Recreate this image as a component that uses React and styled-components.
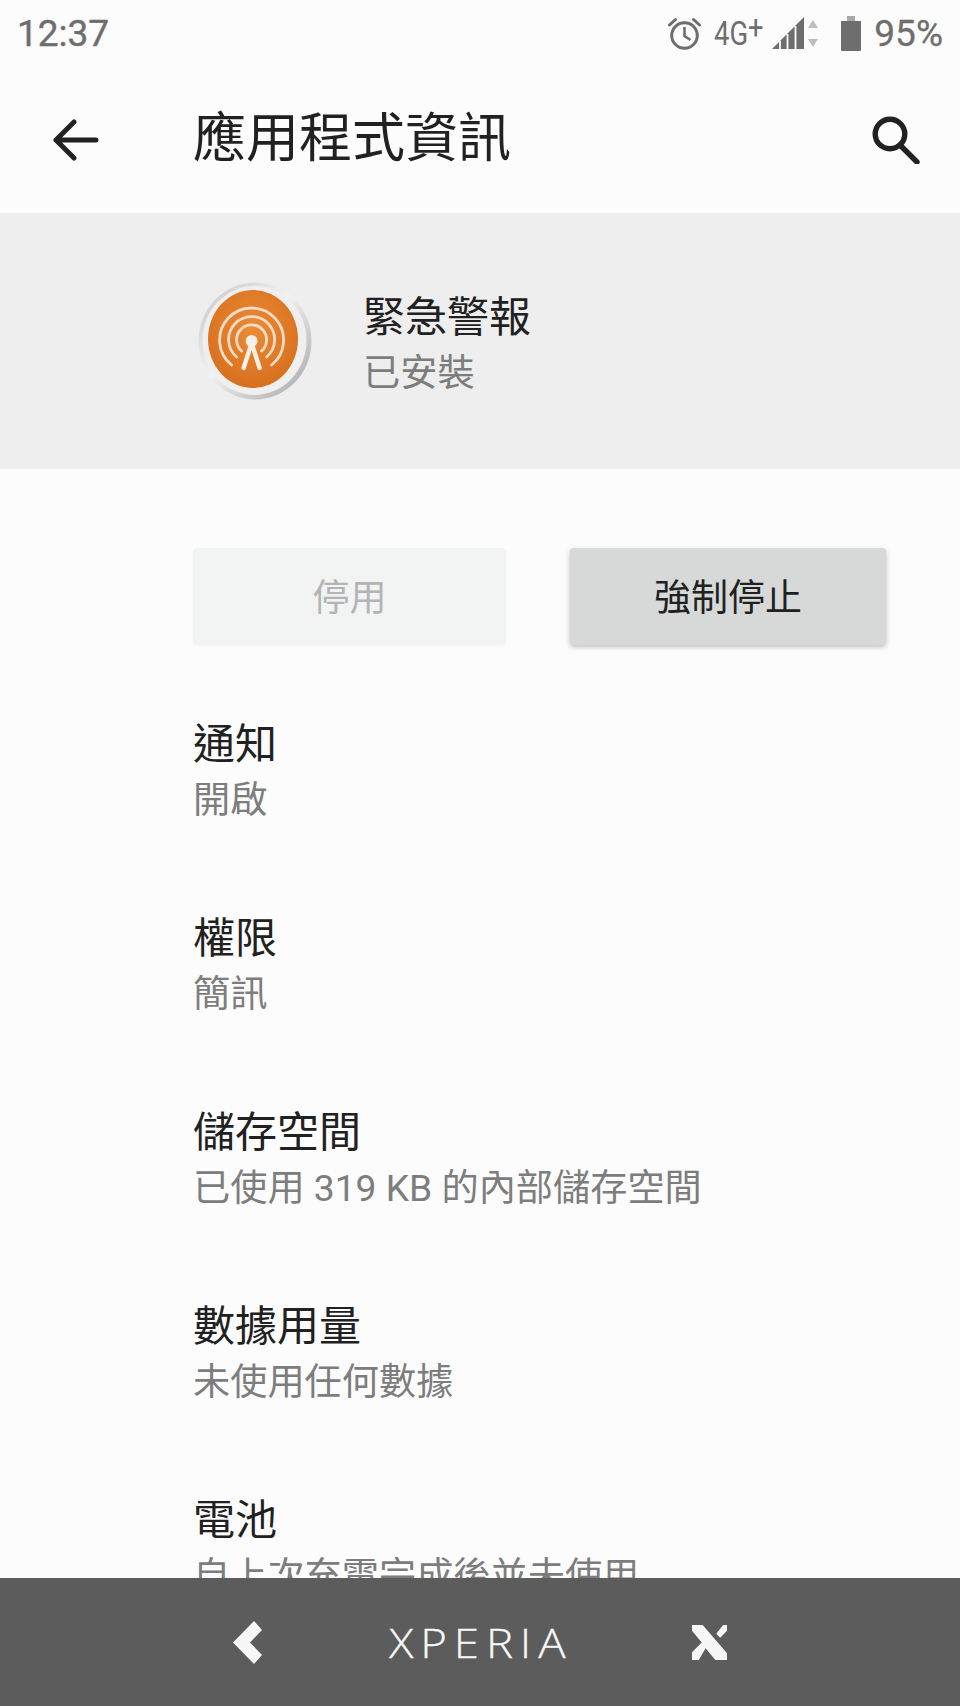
import React from "react";
import styled, { createGlobalStyle } from "styled-components";

const GlobalStyle = createGlobalStyle`
  html, body {
    margin: 0;
    padding: 0;
    background: #fcfcfc;
  }
`;

const Page = styled.div`
  width: 960px;
  height: 1706px;
  display: flex;
  flex-direction: column;
  overflow: hidden;
  background: #fcfcfc;
  font-family: Roboto, "Noto Sans CJK TC", sans-serif;
`;

const StatusBar = styled.div`
  height: 66px;
  flex: none;
  display: flex;
  align-items: center;
  justify-content: space-between;
  padding: 0 17px;
  color: #6e6e6e;
`;

const Clock = styled.span`
  font-size: 37px;
  font-weight: 400;
  -webkit-text-stroke: 0.4px #6e6e6e;
`;

const StatusIcons = styled.div`
  display: flex;
  align-items: center;
`;

const IconSlot = styled.div`
  display: flex;
  margin-right: ${(p) => p.$gap}px;
`;

const Network = styled.span`
  width: 50px;
  margin: 0 8px 0 13px;
  font-size: 33px;
  white-space: nowrap;
  transform: scaleX(0.83);
  transform-origin: left center;
`;

const NetworkPlus = styled.span`
  position: relative;
  top: -6px;
`;

const Percent = styled.span`
  font-size: 37px;
  font-weight: 400;
  -webkit-text-stroke: 0.3px #6e6e6e;
`;

const Toolbar = styled.div`
  height: 147px;
  flex: none;
  display: flex;
  align-items: center;
  padding: 0 40px 0 53px;
  color: #212121;
`;

const Title = styled.h1`
  margin: 0 0 0 94px;
  flex: 1;
  font-size: 53px;
  font-weight: 400;
  line-height: 1;
`;

const AppHeader = styled.div`
  height: 256px;
  flex: none;
  background: #eeeeee;
  display: flex;
  align-items: center;
  padding-left: 197px;
`;

const AppText = styled.div`
  margin-left: 50px;
  margin-top: 8px;
  display: flex;
  flex-direction: column;
`;

const ItemTitle = styled.div`
  font-size: 42px;
  line-height: 56px;
  color: #212121;
`;

const ItemSub = styled.div`
  font-size: 37.2px;
  line-height: 54px;
  color: #7d7d7d;
  white-space: nowrap;
`;

const Content = styled.div`
  flex: 1;
  min-height: 0;
  overflow: hidden;
  padding: 79px 74px 0 193px;
`;

const ButtonRow = styled.div`
  display: flex;
  justify-content: space-between;
  margin-bottom: 72px;
`;

const ActionButton = styled.button`
  width: ${(p) => (p.disabled ? 313 : 316)}px;
  height: 97px;
  border: 0;
  border-radius: 4px;
  padding: 0 0 4px;
  font-family: inherit;
  font-size: 37px;
  background: ${(p) => (p.disabled ? "#f2f3f3" : "#d7d8d8")};
  color: ${(p) => (p.disabled ? "#b4b4b4" : "#212121")};
  box-shadow: ${(p) =>
    p.disabled ? "0 1px 2px rgba(0,0,0,0.03)" : "0 2px 5px rgba(0,0,0,0.25)"};
`;

const Item = styled.div`
  height: 194px;
`;

const BottomBar = styled.div`
  height: 128px;
  flex: none;
  background: #5c5c5c;
  display: flex;
  align-items: center;
  justify-content: center;
  color: #f7f7f7;
`;

const Brand = styled.span`
  width: 181px;
  margin: 0 122px 0 126px;
  font-family: "Open Sans", sans-serif;
  font-size: 40px;
  font-weight: 300;
  letter-spacing: 6px;
  white-space: nowrap;
  transform: scaleX(1.14);
  transform-origin: left center;
  -webkit-text-stroke: 0.3px #f7f7f7;
`;

const AlarmIcon = () => (
  <svg width="33" height="33" viewBox="0 0 33 33" fill="none" stroke="#6e6e6e" strokeWidth="3">
    <circle cx="16.5" cy="18.5" r="12.8" />
    <path d="M16.5 10v9l6 4" strokeWidth="2.6" />
    <path d="M1.5 8l6-5.5M31.5 8l-6-5.5" strokeLinecap="round" />
  </svg>
);

const SignalIcon = () => (
  <svg width="46" height="32" viewBox="0 0 46 32">
    <path d="M0 32L32 0v32z" fill="#6e6e6e" />
    <path d="M8 32v-8M15.5 32v-15M23.5 32v-23" stroke="#fcfcfc" strokeWidth="1.8" />
    <path d="M41 3l5 8h-10zM41 30l5-8h-10z" fill="#bdbdbd" />
  </svg>
);

const BatteryIcon = () => (
  <svg width="20" height="35" viewBox="0 0 20 35">
    <path d="M6 0h8v5H6z" fill="#a8a8a8" />
    <path d="M0 5h20v29a1 1 0 0 1-1 1H1a1 1 0 0 1-1-1z" fill="#6e6e6e" />
  </svg>
);

const BackIcon = () => (
  <svg width="46" height="42" viewBox="0 0 46 42" fill="none" stroke="#212121" strokeWidth="5" strokeLinecap="round">
    <path d="M3 21h40M21 3L3 21l18 18" strokeLinejoin="round" />
  </svg>
);

const SearchIcon = () => (
  <svg width="48" height="48" viewBox="0 0 48 48" fill="none" stroke="#212121" strokeWidth="5.4">
    <circle cx="18" cy="18" r="14.8" />
    <path d="M28 29l17 17" strokeLinecap="round" />
  </svg>
);

const AppIcon = () => (
  <svg width="116" height="120" viewBox="0 0 116 120">
    <defs>
      <linearGradient id="rim" x1="0" y1="0" x2="1" y2="1">
        <stop offset="0" stopColor="#c4c4c4" />
        <stop offset="0.45" stopColor="#f2f2f2" />
        <stop offset="1" stopColor="#a3a3a3" />
      </linearGradient>
      <radialGradient id="disc" cx="0.5" cy="0.4" r="0.7">
        <stop offset="0" stopColor="#ec8a36" />
        <stop offset="1" stopColor="#d46c1a" />
      </radialGradient>
    </defs>
    <ellipse cx="58" cy="60" rx="56.5" ry="58.5" fill="url(#rim)" />
    <ellipse cx="57.5" cy="59.5" rx="52" ry="54.5" fill="#efefef" />
    <ellipse cx="56" cy="58" rx="45" ry="49" fill="url(#disc)" />
    <g fill="none" stroke="#f4dcc4" strokeWidth="2.8" strokeLinecap="round">
      <path d="M34.6 84A32 32 0 1 1 74.6 84" />
      <path d="M39.6 76A23 23 0 1 1 69.6 76" />
      <path d="M44.6 70A15 15 0 1 1 64.6 70" />
    </g>
    <circle cx="54.6" cy="60" r="6" fill="#f8efe6" />
    <path d="M54.6 62l-8 25M54.6 62l8 25" stroke="#f8efe6" strokeWidth="4.4" strokeLinecap="round" fill="none" />
  </svg>
);

const ChevronMark = () => (
  <svg width="30" height="43" viewBox="0 0 30 43">
    <path d="M21 0l8 9-12 12.5 12 12.5-8 9L0 21.5z" fill="#f7f7f7" />
  </svg>
);

const XMark = () => (
  <svg width="35" height="35" viewBox="0 0 36 36">
    <path d="M0 0h11l25 29v7H24L14 24 7 36H0v-8l10-10L0 6z" fill="#f7f7f7" />
    <path d="M25 9l7-9h4v6l-7 7z" fill="#f7f7f7" />
  </svg>
);

const items = [
  ["通知", "開啟"],
  ["權限", "簡訊"],
  ["儲存空間", "已使用 319 KB 的內部儲存空間"],
  ["數據用量", "未使用任何數據"],
  ["電池", "自上次充電完成後並未使用"],
];

const App = () => {
  return (
    <Page>
      <GlobalStyle />
      <StatusBar>
        <Clock>12:37</Clock>
        <StatusIcons>
          <AlarmIcon />
          <Network>
            4G<NetworkPlus>+</NetworkPlus>
          </Network>
          <IconSlot $gap={23}>
            <SignalIcon />
          </IconSlot>
          <IconSlot $gap={13}>
            <BatteryIcon />
          </IconSlot>
          <Percent>95%</Percent>
        </StatusIcons>
      </StatusBar>
      <Toolbar>
        <BackIcon />
        <Title>應用程式資訊</Title>
        <SearchIcon />
      </Toolbar>
      <AppHeader>
        <AppIcon />
        <AppText>
          <ItemTitle>緊急警報</ItemTitle>
          <ItemSub>已安裝</ItemSub>
        </AppText>
      </AppHeader>
      <Content>
        <ButtonRow>
          <ActionButton disabled>停用</ActionButton>
          <ActionButton>強制停止</ActionButton>
        </ButtonRow>
        {items.map(([title, sub]) => (
          <Item key={title}>
            <ItemTitle>{title}</ItemTitle>
            <ItemSub>{sub}</ItemSub>
          </Item>
        ))}
      </Content>
      <BottomBar>
        <ChevronMark />
        <Brand>XPERIA</Brand>
        <XMark />
      </BottomBar>
    </Page>
  );
};

export default App;
